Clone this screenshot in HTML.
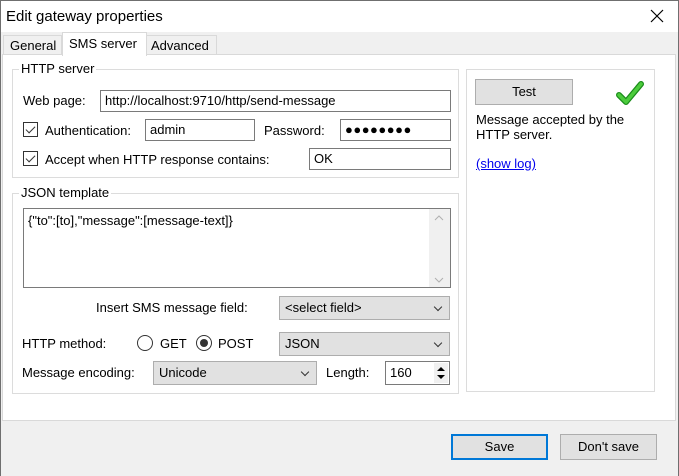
<!DOCTYPE html>
<html><head><style>
*{box-sizing:border-box}
body{margin:0;width:679px;height:476px;position:relative;overflow:hidden;background:#f0f0f0;font-family:"Liberation Sans",sans-serif;font-size:13px;color:#000}
.a{position:absolute}
.inp{position:absolute;background:#fff;border:1px solid #7a7a7a;padding:2px 4px;line-height:16px;white-space:nowrap}
.grp{position:absolute;border:1px solid #dcdcdc}
.gl{position:absolute;top:-9px;left:6px;background:#fff;padding:0 2px;line-height:16px}
.sel{position:absolute;background:#e1e1e1;border:1px solid #adadad;padding:3px 5px;line-height:16px}
.sel:after{content:"";position:absolute;right:8px;top:7px;width:5px;height:5px;border-right:1px solid #333;border-bottom:1px solid #333;transform:rotate(45deg)}
.cb{position:absolute;width:15px;height:15px;border:1px solid #333;background:#fff}
.cb:after{content:"";position:absolute;left:4px;top:1px;width:4px;height:8px;border-right:1px solid #333;border-bottom:1px solid #333;transform:rotate(45deg)}
.rd{position:absolute;width:16px;height:16px;border:1px solid #333;border-radius:50%;background:#fff}
.btn{position:absolute;background:#e1e1e1;border:1px solid #adadad;text-align:center;line-height:23px}
</style></head><body>
<div class="a" style="left:0;top:0;width:679px;height:476px;border:1px solid #6f6f6f;border-bottom:none"></div>
<div class="a" style="left:1px;top:1px;width:677px;height:31px;background:#fff"></div>
<div class="a" style="left:6px;top:8px;font-size:15px">Edit gateway properties</div>
<svg class="a" style="left:649px;top:8px" width="16" height="16"><path d="M2 2L14 14M14 2L2 14" stroke="#000" stroke-width="1.2"/></svg>
<div class="a" style="left:2px;top:54px;width:674px;height:367px;background:#fff;border:1px solid #d9d9d9"></div>
<div class="a" style="left:3px;top:35px;width:59px;height:20px;border:1px solid #d9d9d9;background:#f0f0f0;padding-left:6px;line-height:19px">General</div>
<div class="a" style="left:146px;top:35px;width:71px;height:20px;border:1px solid #d9d9d9;background:#f0f0f0;padding-left:4px;line-height:19px">Advanced</div>
<div class="a" style="left:62px;top:32px;width:85px;height:24px;border:1px solid #d9d9d9;border-bottom:none;background:#fff;padding-left:6px;line-height:22px">SMS server</div>

<div class="grp" style="left:12px;top:69px;width:447px;height:109px;background:#fff"><div class="gl">HTTP server</div></div>
<div class="a" style="left:23px;top:93px">Web page:</div>
<div class="inp" style="left:100px;top:90px;width:351px;height:22px">http://localhost:9710/http/send-message</div>
<div class="cb" style="left:23px;top:122px"></div>
<div class="a" style="left:45px;top:123px">Authentication:</div>
<div class="inp" style="left:145px;top:119px;width:110px;height:22px">admin</div>
<div class="a" style="left:264px;top:123px">Password:</div>
<div class="inp" style="left:340px;top:119px;width:111px;height:22px;letter-spacing:0.5px">●●●●●●●●</div>
<div class="cb" style="left:23px;top:151px"></div>
<div class="a" style="left:45px;top:152px">Accept when HTTP response contains:</div>
<div class="inp" style="left:309px;top:148px;width:142px;height:22px">OK</div>

<div class="grp" style="left:12px;top:193px;width:447px;height:201px"><div class="gl">JSON template</div></div>
<div class="inp" style="left:23px;top:208px;width:428px;height:80px;padding-top:4px">{"to":[to],"message":[message-text]}</div>
<div class="a" style="left:429px;top:209px;width:21px;height:78px;background:#f0f0f0"></div>
<svg class="a" style="left:433px;top:213px" width="12" height="74"><path d="M2 7L6 3L10 7M2 65L6 69L10 65" stroke="#b0b0b0" fill="none"/></svg>
<div class="a" style="left:96px;top:300px">Insert SMS message field:</div>
<div class="sel" style="left:279px;top:296px;width:171px;height:24px">&lt;select field&gt;</div>
<div class="a" style="left:22px;top:336px">HTTP method:</div>
<div class="rd" style="left:137px;top:335px"></div>
<div class="a" style="left:160px;top:336px">GET</div>
<div class="rd" style="left:196px;top:335px"></div>
<div class="a" style="left:200px;top:339px;width:8px;height:8px;border-radius:50%;background:#333"></div>
<div class="a" style="left:218px;top:336px">POST</div>
<div class="sel" style="left:279px;top:332px;width:171px;height:24px">JSON</div>
<div class="a" style="left:22px;top:365px">Message encoding:</div>
<div class="sel" style="left:153px;top:361px;width:164px;height:24px">Unicode</div>
<div class="a" style="left:326px;top:365px">Length:</div>
<div class="inp" style="left:385px;top:361px;width:65px;height:24px;padding-top:3px">160</div>
<div class="a" style="left:434px;top:363px;width:14px;height:20px;background:#f0f0f0"></div>
<svg class="a" style="left:435px;top:364px" width="12" height="18"><path d="M2 7L6 3L10 7ZM2 11L6 15L10 11Z" fill="#000"/></svg>

<div class="grp" style="left:466px;top:69px;width:189px;height:323px"></div>
<div class="btn" style="left:475px;top:79px;width:98px;height:26px">Test</div>
<svg class="a" style="left:616px;top:80px" width="28" height="27"><path d="M3 15L10 22L25 4" stroke="#1a8c1a" stroke-width="6" fill="none" stroke-linecap="round" stroke-linejoin="round"/><path d="M3 15L10 22L25 4" stroke="#4ccc3c" stroke-width="3.5" fill="none" stroke-linecap="round" stroke-linejoin="round"/></svg>
<div class="a" style="left:476px;top:112px;line-height:15px">Message accepted by the<br>HTTP server.</div>
<div class="a" style="left:476px;top:156px;color:#0000ee;text-decoration:underline">(show log)</div>

<div class="btn" style="left:451px;top:434px;width:97px;height:26px;border:2px solid #0078d7;line-height:22px">Save</div>
<div class="btn" style="left:560px;top:434px;width:97px;height:26px">Don't save</div>
</body></html>
